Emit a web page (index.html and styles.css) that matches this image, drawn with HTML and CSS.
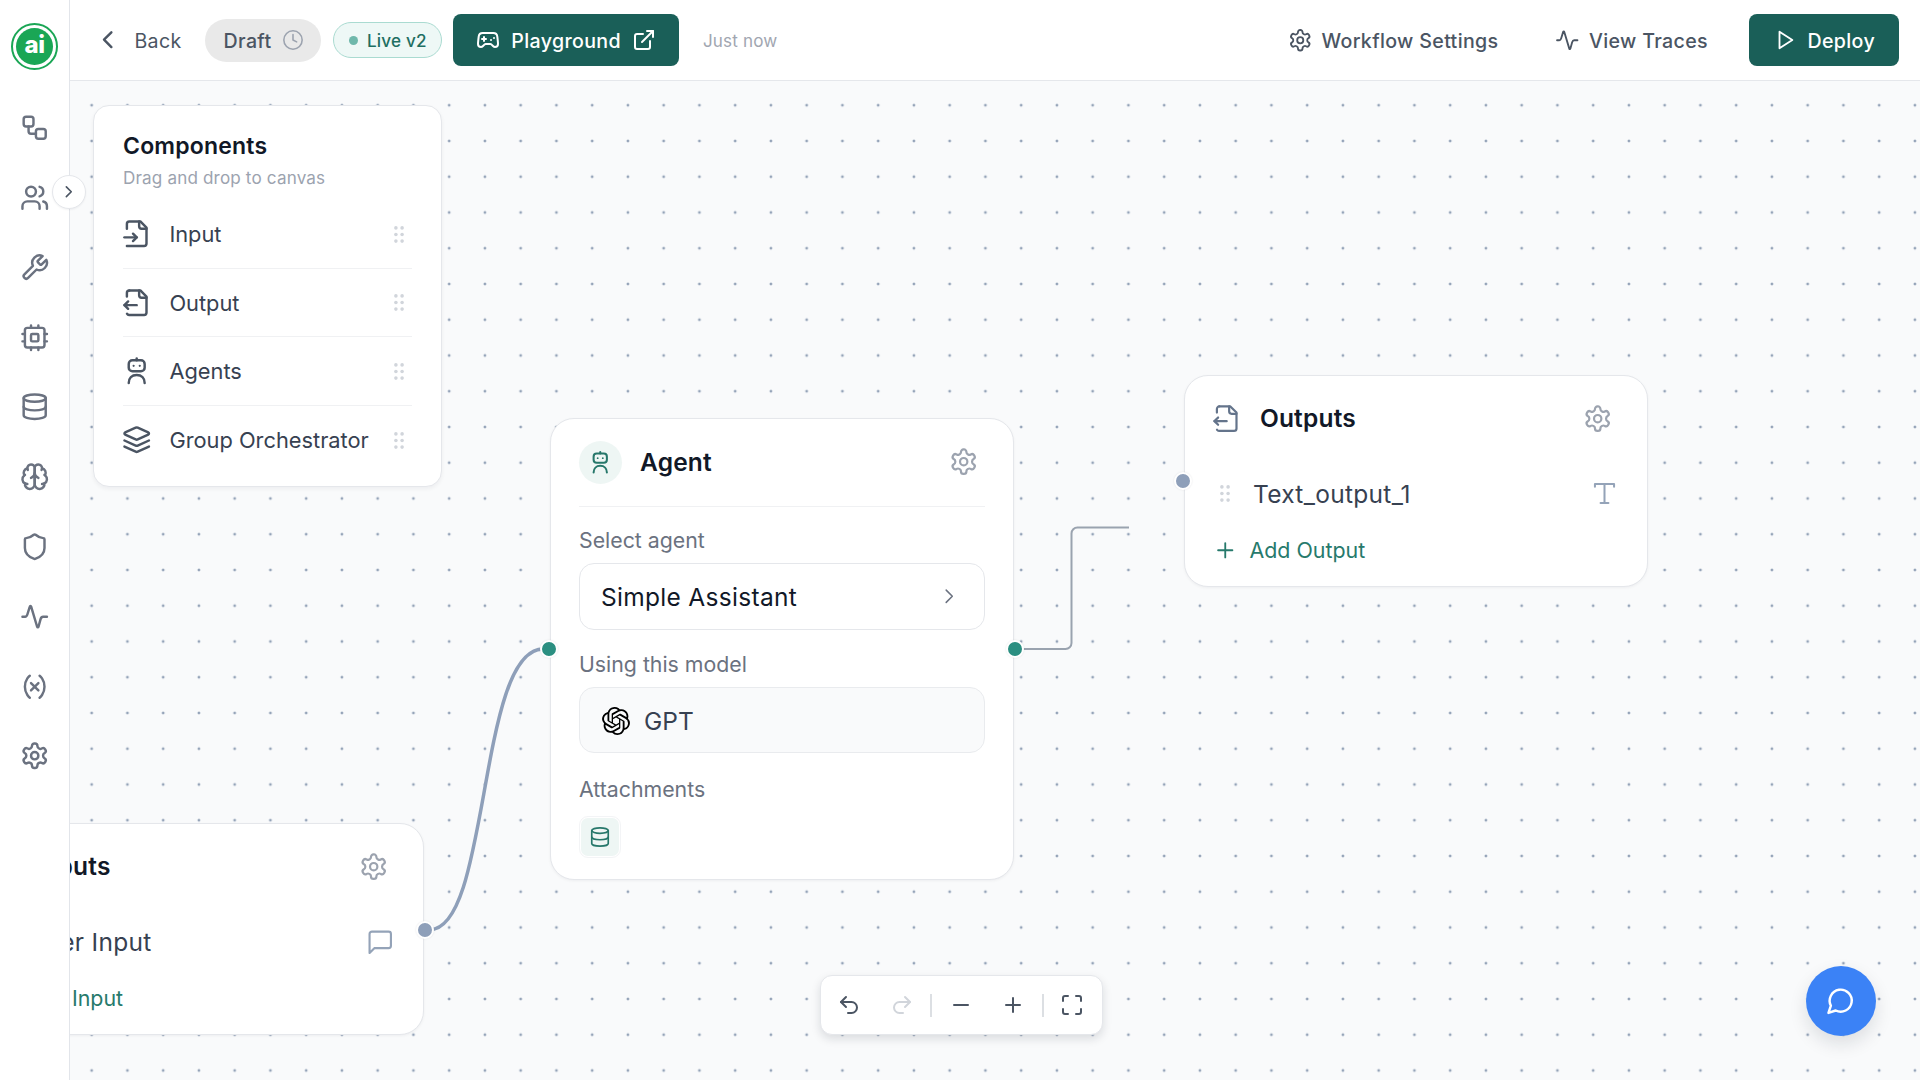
FILE: index.html
```html
<!DOCTYPE html>
<html lang="en">
<head>
<meta charset="utf-8">
<title>Workflow</title>
<link rel="stylesheet" href="styles.css">
</head>
<body>
<svg class="sprite" aria-hidden="true">
  <defs>
    <symbol id="i-settings" viewBox="0 0 24 24"><path d="M12.22 2h-.44a2 2 0 0 0-2 2v.18a2 2 0 0 1-1 1.73l-.43.25a2 2 0 0 1-2 0l-.15-.08a2 2 0 0 0-2.73.73l-.22.38a2 2 0 0 0 .73 2.73l.15.1a2 2 0 0 1 1 1.72v.51a2 2 0 0 1-1 1.74l-.15.09a2 2 0 0 0-.73 2.73l.22.38a2 2 0 0 0 2.73.73l.15-.08a2 2 0 0 1 2 0l.43.25a2 2 0 0 1 1 1.73V20a2 2 0 0 0 2 2h.44a2 2 0 0 0 2-2v-.18a2 2 0 0 1 1-1.73l.43-.25a2 2 0 0 1 2 0l.15.08a2 2 0 0 0 2.73-.73l.22-.39a2 2 0 0 0-.73-2.73l-.15-.08a2 2 0 0 1-1-1.74v-.5a2 2 0 0 1 1-1.74l.15-.09a2 2 0 0 0 .73-2.73l-.22-.38a2 2 0 0 0-2.73-.73l-.15.08a2 2 0 0 1-2 0l-.43-.25a2 2 0 0 1-1-1.73V4a2 2 0 0 0-2-2z"/><circle cx="12" cy="12" r="3"/></symbol>
    <symbol id="i-workflow" viewBox="0 0 24 24"><rect x="3" y="3" width="8" height="8" rx="2"/><path d="M7 11v4a2 2 0 0 0 2 2h4"/><rect x="13" y="13" width="8" height="8" rx="2"/></symbol>
    <symbol id="i-users" viewBox="0 0 24 24"><path d="M16 21v-2a4 4 0 0 0-4-4H6a4 4 0 0 0-4 4v2"/><circle cx="9" cy="7" r="4"/><path d="M22 21v-2a4 4 0 0 0-3-3.87"/><path d="M16 3.13a4 4 0 0 1 0 7.75"/></symbol>
    <symbol id="i-wrench" viewBox="0 0 24 24"><path d="M14.7 6.3a1 1 0 0 0 0 1.4l1.6 1.6a1 1 0 0 0 1.4 0l3.77-3.77a6 6 0 0 1-7.94 7.94l-6.91 6.91a2.12 2.12 0 0 1-3-3l6.91-6.91a6 6 0 0 1 7.94-7.94l-3.76 3.76z"/></symbol>
    <symbol id="i-cpu" viewBox="0 0 24 24"><rect x="4" y="4" width="16" height="16" rx="2"/><rect x="9" y="9" width="6" height="6" rx="1"/><path d="M15 2v2M15 20v2M2 15h2M2 9h2M20 15h2M20 9h2M9 2v2M9 20v2"/></symbol>
    <symbol id="i-database" viewBox="0 0 24 24"><ellipse cx="12" cy="5" rx="9" ry="3"/><path d="M3 5V19A9 3 0 0 0 21 19V5"/><path d="M3 12A9 3 0 0 0 21 12"/></symbol>
    <symbol id="i-brain" viewBox="0 0 24 24"><path d="M12 5a3 3 0 1 0-5.997.125 4 4 0 0 0-2.526 5.77 4 4 0 0 0 .556 6.588A4 4 0 1 0 12 18Z"/><path d="M12 5a3 3 0 1 1 5.997.125 4 4 0 0 1 2.526 5.77 4 4 0 0 1-.556 6.588A4 4 0 1 1 12 18Z"/><path d="M15 13a4.5 4.5 0 0 1-3-4 4.5 4.5 0 0 1-3 4"/><path d="M17.599 6.5a3 3 0 0 0 .399-1.375"/><path d="M6.003 5.125A3 3 0 0 0 6.401 6.5"/><path d="M3.477 10.896a4 4 0 0 1 .585-.396"/><path d="M19.938 10.5a4 4 0 0 1 .585.396"/><path d="M6 18a4 4 0 0 1-1.967-.516"/><path d="M19.967 17.484A4 4 0 0 1 18 18"/></symbol>
    <symbol id="i-shield" viewBox="0 0 24 24"><path d="M20 13c0 5-3.5 7.5-7.66 8.95a1 1 0 0 1-.67-.01C7.5 20.5 4 18 4 13V6a1 1 0 0 1 1-1c2 0 4.5-1.2 6.24-2.72a1.17 1.17 0 0 1 1.52 0C14.51 3.81 17 5 19 5a1 1 0 0 1 1 1z"/></symbol>
    <symbol id="i-activity" viewBox="0 0 24 24"><path d="M2 12h2.2c1.1 0 1.5-.8 1.8-1.8L8 3.8c.2-.7.9-.7 1.1 0L14 20.2c.2.7.9.7 1.1 0l1.7-6.200c.3-1 .8-2 2-2H22"/></symbol>
    <symbol id="i-variable" viewBox="0 0 24 24"><path d="M8 21s-4-3-4-9 4-9 4-9"/><path d="M16 3s4 3 4 9-4 9-4 9"/><path d="M15 9l-6 6"/><path d="M9 9l6 6"/></symbol>
    <symbol id="i-file-in" viewBox="0 0 24 24"><path d="M4 22h14a2 2 0 0 0 2-2V7l-5-5H6a2 2 0 0 0-2 2v4"/><path d="M14 2v4a2 2 0 0 0 2 2h4"/><path d="M2 15h10"/><path d="m9 18 3-3-3-3"/></symbol>
    <symbol id="i-file-out" viewBox="0 0 24 24"><path d="M14 2v4a2 2 0 0 0 2 2h4"/><path d="M4 7V4a2 2 0 0 1 2-2"/><path d="M4.063 20.999a2 2 0 0 0 2 1L18 22a2 2 0 0 0 2-2V7l-5-5H6"/><path d="m5 11-3 3"/><path d="m5 17-3-3h10"/></symbol>
    <symbol id="i-robot" viewBox="0 0 24 24"><rect x="5.5" y="3.5" width="13" height="9" rx="3"/><path d="M12 3.5V2"/><circle class="fill" cx="9.5" cy="8" r=".9"/><circle class="fill" cx="14.5" cy="8" r=".9"/><path d="M5.5 22c0-4 2.600-6.500 6.500-6.500s6.500 2.500 6.500 6.500"/></symbol>
    <symbol id="i-layers" viewBox="0 0 24 24"><path d="m12.83 2.18a2 2 0 0 0-1.66 0L2.6 6.08a1 1 0 0 0 0 1.83l8.58 3.91a2 2 0 0 0 1.66 0l8.58-3.9a1 1 0 0 0 0-1.83Z"/><path d="m22 17.65-9.17 4.16a2 2 0 0 1-1.66 0L2 17.65"/><path d="m22 12.65-9.17 4.16a2 2 0 0 1-1.66 0L2 12.65"/></symbol>
    <symbol id="i-left" viewBox="0 0 24 24"><path d="m15 18-6-6 6-6"/></symbol>
    <symbol id="i-right" viewBox="0 0 24 24"><path d="m9 18 6-6-6-6"/></symbol>
    <symbol id="i-clock" viewBox="0 0 24 24"><circle cx="12" cy="12" r="10"/><path d="M12 6v6l4 2"/></symbol>
    <symbol id="i-gamepad" viewBox="0 0 24 24"><path d="M6 11h4M8 9v4M15 12h.01M18 10h.01"/><path d="M17.32 5H6.68a4 4 0 0 0-3.978 3.59c-.006.052-.01.101-.017.152C2.604 9.416 2 14.456 2 16a3 3 0 0 0 3 3c1 0 1.5-.5 2-1l1.414-1.414A2 2 0 0 1 9.828 16h4.344a2 2 0 0 1 1.414.586L17 18c.5.5 1 1 2 1a3 3 0 0 0 3-3c0-1.545-.604-6.584-.685-7.258-.007-.05-.011-.1-.017-.151A4 4 0 0 0 17.32 5z"/></symbol>
    <symbol id="i-external" viewBox="0 0 24 24"><path d="M15 3h6v6"/><path d="M10 14 21 3"/><path d="M18 13v6a2 2 0 0 1-2 2H5a2 2 0 0 1-2-2V8a2 2 0 0 1 2-2h6"/></symbol>
    <symbol id="i-play" viewBox="0 0 24 24"><path d="M6 3l14 9-14 9z"/></symbol>
    <symbol id="i-grip" viewBox="0 0 10 17"><circle class="fill" cx="1.9" cy="1.9" r="1.8"/><circle class="fill" cx="8.1" cy="1.9" r="1.8"/><circle class="fill" cx="1.9" cy="8.5" r="1.8"/><circle class="fill" cx="8.1" cy="8.5" r="1.8"/><circle class="fill" cx="1.9" cy="15.1" r="1.8"/><circle class="fill" cx="8.1" cy="15.1" r="1.8"/></symbol>
    <symbol id="i-type" viewBox="0 0 24 24"><path d="M3.5 6V3.500h17V6"/><path d="M12 3.500v17"/><path d="M8.500 20.500h7"/></symbol>
    <symbol id="i-message" viewBox="0 0 24 24"><path d="M21 15a2 2 0 0 1-2 2H7l-4 4V5a2 2 0 0 1 2-2h14a2 2 0 0 1 2 2z"/></symbol>
    <symbol id="i-plus" viewBox="0 0 24 24"><path d="M5 12h14"/><path d="M12 5v14"/></symbol>
    <symbol id="i-minus" viewBox="0 0 24 24"><path d="M5 12h14"/></symbol>
    <symbol id="i-undo" viewBox="0 0 24 24"><path d="M9 14 4 9l5-5"/><path d="M4 9h10.5a5.5 5.5 0 0 1 5.5 5.5a5.5 5.5 0 0 1-5.5 5.5H11"/></symbol>
    <symbol id="i-redo" viewBox="0 0 24 24"><path d="m15 14 5-5-5-5"/><path d="M20 9H9.5A5.5 5.5 0 0 0 4 14.5A5.5 5.5 0 0 0 9.5 20H13"/></symbol>
    <symbol id="i-maximize" viewBox="0 0 24 24"><path d="M8 3H5a2 2 0 0 0-2 2v3"/><path d="M21 8V5a2 2 0 0 0-2-2h-3"/><path d="M3 16v3a2 2 0 0 0 2 2h3"/><path d="M16 21h3a2 2 0 0 0 2-2v-3"/></symbol>
    <symbol id="i-bubble" viewBox="0 0 24 24"><path d="M7.9 20A9 9 0 1 0 4 16.1L2 22Z"/></symbol>
    <symbol id="i-openai" viewBox="0 0 24 24"><path class="fill" d="M22.2819 9.8211a5.9847 5.9847 0 0 0-.5157-4.9108 6.0462 6.0462 0 0 0-6.5098-2.9A6.0651 6.0651 0 0 0 4.9807 4.1818a5.9847 5.9847 0 0 0-3.9977 2.9 6.0462 6.0462 0 0 0 .7427 7.0966 5.98 5.98 0 0 0 .511 4.9107 6.051 6.051 0 0 0 6.5146 2.9001A5.9847 5.9847 0 0 0 13.2599 24a6.0557 6.0557 0 0 0 5.7718-4.2058 5.9894 5.9894 0 0 0 3.9977-2.9001 6.0557 6.0557 0 0 0-.7475-7.0729zm-9.022 12.6081a4.4755 4.4755 0 0 1-2.8764-1.0408l.1419-.0804 4.7783-2.7582a.7948.7948 0 0 0 .3927-.6813v-6.7369l2.02 1.1686a.071.071 0 0 1 .038.052v5.5826a4.504 4.504 0 0 1-4.4945 4.4944zm-9.6607-4.1254a4.4708 4.4708 0 0 1-.5346-3.0137l.142.0852 4.783 2.7582a.7712.7712 0 0 0 .7806 0l5.8428-3.3685v2.3324a.0804.0804 0 0 1-.0332.0615L9.74 19.9502a4.4992 4.4992 0 0 1-6.1408-1.6464zM2.3408 7.8956a4.485 4.485 0 0 1 2.3655-1.9728V11.6a.7664.7664 0 0 0 .3879.6765l5.8144 3.3543-2.0201 1.1685a.0757.0757 0 0 1-.071 0l-4.8303-2.7865A4.504 4.504 0 0 1 2.3408 7.872zm16.5963 3.8558L13.1038 8.364 15.1192 7.2a.0757.0757 0 0 1 .071 0l4.8303 2.7913a4.4944 4.4944 0 0 1-.6765 8.1042v-5.6772a.79.79 0 0 0-.407-.667zm2.0107-3.0231l-.142-.0852-4.7735-2.7818a.7759.7759 0 0 0-.7854 0L9.409 9.2297V6.8974a.0662.0662 0 0 1 .0284-.0615l4.8303-2.7866a4.4992 4.4992 0 0 1 6.6802 4.66zM8.3065 12.863l-2.02-1.1638a.0804.0804 0 0 1-.038-.0567V6.0742a4.4992 4.4992 0 0 1 7.3757-3.4537l-.142.0805L8.704 5.459a.7948.7948 0 0 0-.3927.6813zm1.0976-2.3654l2.602-1.4998 2.6069 1.4998v2.9994l-2.5974 1.4997-2.6067-1.4997Z"/></symbol>
  </defs>
</svg>

<aside class="sidebar">
  <div class="logo"><div class="logo-disc">ai</div></div>
  <nav class="nav">
    <a class="nav-item"><svg class="ic ic-nav"><use href="#i-workflow"/></svg></a>
    <a class="nav-item"><svg class="ic ic-nav"><use href="#i-users"/></svg></a>
    <a class="nav-item"><svg class="ic ic-nav"><use href="#i-wrench"/></svg></a>
    <a class="nav-item"><svg class="ic ic-nav"><use href="#i-cpu"/></svg></a>
    <a class="nav-item"><svg class="ic ic-nav"><use href="#i-database"/></svg></a>
    <a class="nav-item"><svg class="ic ic-nav"><use href="#i-brain"/></svg></a>
    <a class="nav-item"><svg class="ic ic-nav"><use href="#i-shield"/></svg></a>
    <a class="nav-item"><svg class="ic ic-nav"><use href="#i-activity"/></svg></a>
    <a class="nav-item"><svg class="ic ic-nav"><use href="#i-variable"/></svg></a>
    <a class="nav-item"><svg class="ic ic-nav"><use href="#i-settings"/></svg></a>
  </nav>
  <button class="toggle"><svg class="ic ic-toggle"><use href="#i-right"/></svg></button>
</aside>

<div class="main">
  <header class="topbar">
    <a class="back"><svg class="ic ic-back"><use href="#i-left"/></svg><span class="top-text">Back</span></a>
    <span class="pill-draft"><span class="top-text">Draft</span><svg class="ic ic-clock"><use href="#i-clock"/></svg></span>
    <span class="pill-live"><i class="live-dot"></i><span>Live v2</span></span>
    <a class="btn btn-playground"><svg class="ic ic-btn"><use href="#i-gamepad"/></svg><span class="top-text">Playground</span><svg class="ic ic-btn"><use href="#i-external"/></svg></a>
    <span class="saved">Just now</span>
    <a class="link link-settings"><svg class="ic ic-link"><use href="#i-settings"/></svg><span class="top-text">Workflow Settings</span></a>
    <a class="link link-traces"><svg class="ic ic-link"><use href="#i-activity"/></svg><span class="top-text">View Traces</span></a>
    <a class="btn btn-deploy"><svg class="ic ic-play"><use href="#i-play"/></svg><span class="top-text">Deploy</span></a>
  </header>

  <main class="canvas">
    <svg class="edges">
      <path class="edge-thick" d="M360 848.5C420 848.5 408 568 473 568"/>
      <path class="edge-thin" d="M945 568H995.5a6 6 0 0 0 6-6V452.500a6 6 0 0 1 6-6H1059"/>
    </svg>

    <section class="panel">
      <h2 class="panel-title">Components</h2>
      <p class="panel-sub">Drag and drop to canvas</p>
      <ul class="comp-list">
        <li class="comp"><svg class="ic ic-comp"><use href="#i-file-in"/></svg><span class="comp-name">Input</span><svg class="grip"><use href="#i-grip"/></svg></li>
        <li class="comp"><svg class="ic ic-comp"><use href="#i-file-out"/></svg><span class="comp-name">Output</span><svg class="grip"><use href="#i-grip"/></svg></li>
        <li class="comp"><svg class="ic ic-comp"><use href="#i-robot"/></svg><span class="comp-name">Agents</span><svg class="grip"><use href="#i-grip"/></svg></li>
        <li class="comp"><svg class="ic ic-comp"><use href="#i-layers"/></svg><span class="comp-name">Group Orchestrator</span><svg class="grip"><use href="#i-grip"/></svg></li>
      </ul>
    </section>

    <article class="node node-agent">
      <div class="agent-head">
        <span class="agent-badge"><svg class="ic ic-badge"><use href="#i-robot"/></svg></span>
        <h3 class="node-title">Agent</h3>
        <svg class="ic ic-gear"><use href="#i-settings"/></svg>
      </div>
      <div class="field-label label-first">Select agent</div>
      <div class="select"><span>Simple Assistant</span><svg class="ic ic-chevron"><use href="#i-right"/></svg></div>
      <div class="field-label label-model">Using this model</div>
      <div class="model"><svg class="ic ic-openai"><use href="#i-openai"/></svg><span>GPT</span></div>
      <div class="field-label label-attach">Attachments</div>
      <div class="chip"><svg class="ic ic-chip"><use href="#i-database"/></svg></div>
      <i class="handle handle-green handle-agent-in"></i>
      <i class="handle handle-green handle-agent-out"></i>
    </article>

    <article class="node node-io node-outputs">
      <div class="io-head">
        <svg class="ic ic-io"><use href="#i-file-out"/></svg>
        <h3 class="node-title">Outputs</h3>
        <svg class="ic ic-gear"><use href="#i-settings"/></svg>
      </div>
      <div class="io-row">
        <svg class="grip"><use href="#i-grip"/></svg>
        <span class="io-name">Text_output_1</span>
        <svg class="ic ic-type"><use href="#i-type"/></svg>
      </div>
      <div class="io-add"><svg class="ic ic-plus"><use href="#i-plus"/></svg><span>Add Output</span></div>
      <i class="handle handle-gray handle-out-in"></i>
    </article>

    <article class="node node-io node-inputs">
      <div class="io-head">
        <svg class="ic ic-io"><use href="#i-file-in"/></svg>
        <h3 class="node-title">Inputs</h3>
        <svg class="ic ic-gear"><use href="#i-settings"/></svg>
      </div>
      <div class="io-row">
        <svg class="grip"><use href="#i-grip"/></svg>
        <span class="io-name">User Input</span>
        <svg class="ic ic-msg"><use href="#i-message"/></svg>
      </div>
      <div class="io-add"><svg class="ic ic-plus"><use href="#i-plus"/></svg><span>Add Input</span></div>
      <i class="handle handle-gray handle-in-out"></i>
    </article>

    <div class="toolbar">
      <svg class="ic ic-tool"><use href="#i-undo"/></svg>
      <svg class="ic ic-tool tool-redo"><use href="#i-redo"/></svg>
      <i class="tool-sep"></i>
      <svg class="ic ic-tool"><use href="#i-minus"/></svg>
      <svg class="ic ic-tool tool-plus"><use href="#i-plus"/></svg>
      <i class="tool-sep"></i>
      <svg class="ic ic-tool"><use href="#i-maximize"/></svg>
    </div>

    <button class="fab"><svg class="ic ic-fab"><use href="#i-bubble"/></svg></button>
  </main>
</div>
</body>
</html>
```
FILE: styles.css
```css
* { box-sizing: border-box; }
html, body { margin: 0; height: 100%; }
body {
  display: flex;
  height: 100vh;
  overflow: hidden;
  font-family: Inter, "Liberation Sans", sans-serif;
  background: #fff;
  color: #374151;
}
h2, h3, p, ul { margin: 0; padding: 0; }
ul { list-style: none; }
i { display: block; }
.sprite { position: absolute; width: 0; height: 0; }

.ic { flex: none; fill: none; stroke: currentColor; stroke-width: 2; stroke-linecap: round; stroke-linejoin: round; }
.fill { fill: currentColor; stroke: none; }

/* sidebar */
.sidebar {
  position: relative;
  z-index: 3;
  flex: none;
  width: 70px;
  background: #fff;
  border-right: 1px solid #e2e5ea;
  display: flex;
  flex-direction: column;
  align-items: center;
}
.logo {
  width: 47px;
  height: 47px;
  margin-top: 23px;
  padding: 3px;
  border: 2px solid #1aa655;
  border-radius: 50%;
}
.logo-disc {
  width: 100%;
  height: 100%;
  border-radius: 50%;
  background: #1aa655;
  color: #fff;
  font-weight: 800;
  font-size: 24px;
  line-height: 34px;
  text-align: center;
  letter-spacing: -.5px;
}
.nav { margin-top: 23px; display: flex; flex-direction: column; }
.nav-item { height: 69.8px; display: flex; align-items: center; justify-content: center; color: #6b7280; }
.ic-nav { width: 29.4px; height: 29.4px; }
.toggle {
  position: absolute;
  right: -17px;
  top: 175px;
  width: 34px;
  height: 34px;
  padding: 0;
  border: 1px solid #e5e7eb;
  border-radius: 50%;
  background: #fff;
  color: #4b5563;
  display: flex;
  align-items: center;
  justify-content: center;
  box-shadow: 0 1px 2px rgba(15, 23, 42, .05);
}
.ic-toggle { width: 19.6px; height: 19.6px; }

/* top bar */
.main { flex: 1; min-width: 0; display: flex; flex-direction: column; }
.topbar {
  flex: none;
  height: 81px;
  display: flex;
  align-items: center;
  padding: 0 21px 0 23px;
  background: #fff;
  border-bottom: 1px solid #e5e7eb;
  font-size: 19.6px;
  letter-spacing: .35px;
}
.top-text { padding-top: 1.5px; }
.back { display: flex; align-items: center; gap: 12px; color: #4b5563; }
.ic-back { width: 29.4px; height: 29.4px; }
.pill-draft {
  margin-left: 23px;
  height: 43px;
  padding: 0 17px 0 19px;
  display: flex;
  align-items: center;
  gap: 11px;
  background: #e9e9e9;
  border-radius: 22px;
  color: #4b5563;
  font-weight: 500;
}
.ic-clock { width: 22px; height: 22px; color: #9ca3af; stroke-width: 1.7; }
.pill-live {
  margin-left: 11.5px;
  height: 36px;
  padding: 0 14px 0 15px;
  display: flex;
  align-items: center;
  gap: 9px;
  background: #eef8f6;
  border: 1px solid #aadbd1;
  border-radius: 18px;
  color: #1f6f62;
  font-size: 17.1px;
  font-weight: 500;
  letter-spacing: .2px;
}
.live-dot { width: 9px; height: 9px; border-radius: 50%; background: #6fb8ab; }
.btn {
  height: 52px;
  display: flex;
  align-items: center;
  border-radius: 8px;
  background: #1a5f58;
  color: #fff;
  font-weight: 500;
}
.btn-playground { margin-left: 11.5px; padding: 0 22.5px; gap: 11.5px; }
.ic-btn { width: 24px; height: 24px; }
.saved { margin-left: 24px; color: #a1a6b1; font-size: 17.1px; letter-spacing: .15px; }
.link { display: flex; align-items: center; gap: 9px; color: #4b5563; font-weight: 500; }
.link-settings { margin-left: auto; }
.link-traces { margin-left: 57px; }
.ic-link { width: 24.5px; height: 24.5px; stroke-width: 1.8; }
.btn-deploy { margin-left: 41px; padding: 0 24px 0 25px; gap: 11.5px; }
.ic-play { width: 22px; height: 22px; }

/* canvas */
.canvas {
  position: relative;
  flex: 1;
  overflow: hidden;
  background-color: #f9fafb;
  background-image: radial-gradient(circle, #94a3b8 1.2px, transparent 1.7px);
  background-size: 35.75px 35.75px;
  background-position: 3.8px 6.35px;
}
.edges { position: absolute; inset: 0; width: 100%; height: 100%; fill: none; }
.edge-thick { stroke: #8e9fb9; stroke-width: 3.5px; }
.edge-thin { stroke: #9aa3af; stroke-width: 2px; }

/* components panel */
.panel {
  position: absolute;
  left: 23px;
  top: 24px;
  width: 348.5px;
  height: 381.5px;
  padding: 26px 29px 0;
  background: #fff;
  border: 1px solid #e5e7eb;
  border-radius: 16px;
  box-shadow: 0 2px 4px rgba(15, 23, 42, .05);
  z-index: 2;
}
.panel-title { font-size: 23px; font-weight: 600; line-height: 29px; color: #111827; letter-spacing: .2px; }
.panel-sub { margin-top: 5px; font-size: 17.1px; line-height: 24px; color: #9ca3af; letter-spacing: .15px; }
.comp-list { margin-top: 10.4px; }
.comp {
  height: 68.5px;
  display: flex;
  align-items: center;
  border-bottom: 1px solid #f0f1f3;
  color: #4b5563;
}
.comp:last-child { border-bottom: 0; }
.ic-comp { width: 29.4px; height: 29.4px; margin-left: -1px; }
.comp-name { margin-left: 18px; font-size: 21.8px; color: #374151; }
.grip { flex: none; width: 10px; height: 17px; color: #d1d5db; }
.comp .grip { margin-left: auto; margin-right: 7.3px; }

/* nodes */
.node {
  position: absolute;
  background: #fff;
  border: 1px solid #e5e7eb;
  border-radius: 24px;
  box-shadow: 0 1px 3px rgba(15, 23, 42, .05);
}
.node-title { font-size: 24.5px; font-weight: 600; color: #111827; line-height: 30px; letter-spacing: .2px; }
.ic-gear { width: 29.4px; height: 29.4px; margin-left: auto; color: #9ca3af; stroke-width: 1.8; }

.node-agent { left: 480px; top: 337px; width: 464px; height: 462px; padding: 22px 28px 0; }
.agent-head {
  display: flex;
  align-items: center;
  gap: 18px;
  height: 66px;
  padding-bottom: 23px;
  border-bottom: 1px solid #f0f1f3;
}
.agent-head .ic-gear { margin-right: 7px; }
.agent-badge {
  width: 43px;
  height: 43px;
  border-radius: 50%;
  background: #eef6f4;
  color: #26776a;
  display: flex;
  align-items: center;
  justify-content: center;
}
.ic-badge { width: 24.5px; height: 24.5px; }
.field-label { font-size: 21.3px; line-height: 30px; color: #6b7280; }
.label-first { margin-top: 18px; }
.label-model { margin-top: 19px; }
.label-attach { margin-top: 21px; }
.select {
  margin-top: 8px;
  height: 67px;
  padding: 0 23px 0 21px;
  display: flex;
  align-items: center;
  justify-content: space-between;
  border: 1px solid #e5e7eb;
  border-radius: 15px;
  font-size: 24.5px;
  letter-spacing: .3px;
  color: #111827;
}
.ic-chevron { width: 24.5px; height: 24.5px; color: #6b7280; stroke-width: 1.5; }
.model {
  margin-top: 8px;
  height: 66px;
  padding: 1px 22px 0;
  display: flex;
  align-items: center;
  gap: 14px;
  border: 1px solid #e9ebee;
  border-radius: 15px;
  background: #f9fafb;
  font-size: 24.5px;
  color: #374151;
}
.ic-openai { width: 28px; height: 28px; color: #000; }
.chip {
  margin-top: 12px;
  width: 42px;
  height: 42px;
  border: 2px solid #fff;
  outline: 1px solid #f3f4f6;
  outline-offset: -1px;
  border-radius: 9px;
  background: #eef6f4;
  color: #26776a;
  display: flex;
  align-items: center;
  justify-content: center;
}
.ic-chip { width: 22px; height: 22px; stroke-width: 1.8; }

.handle { position: absolute; width: 14px; height: 14px; border-radius: 50%; border: 2px solid #fff; box-shadow: 0 0 2px rgba(15, 23, 42, .1); box-sizing: content-box; }
.handle-green { background: #2b8f81; }
.handle-gray { background: #8e9fb9; }
.handle-agent-in { left: -11.5px; top: 220.5px; }
.handle-agent-out { right: -10.5px; top: 220.5px; }
.handle-out-in { left: -11.5px; top: 96px; }
.handle-in-out { right: -11.5px; top: 96.5px; }

.node-io { width: 464px; height: 212px; padding: 0 29px; }
.node-outputs { left: 1114px; top: 294px; }
.node-inputs { left: -110.5px; top: 742px; }
.io-head { height: 84.5px; display: flex; align-items: center; gap: 18.5px; }
.ic-io { width: 29.4px; height: 29.4px; margin-left: -2px; color: #64748b; stroke-width: 1.8; }
.io-head .ic-gear { margin-right: 5.3px; }
.io-row { height: 66px; margin-top: .3px; display: flex; align-items: center; }
.io-row .grip { margin-left: 6.3px; margin-right: 22.7px; }
.io-name { font-size: 24.5px; letter-spacing: .3px; color: #374151; }
.ic-type { width: 27px; height: 27px; margin-left: auto; margin-right: .5px; color: #94a3b8; stroke-width: 1.8; }
.ic-msg { width: 28.5px; height: 28.5px; margin-left: auto; margin-right: -.75px; color: #94a3b8; stroke-width: 1.8; }
.io-add { margin-top: 10px; display: flex; align-items: center; gap: 11.75px; font-size: 21.4px; color: #277a6c; }
.ic-plus { width: 24.5px; height: 24.5px; margin-left: -.75px; stroke-width: 1.8; }

/* zoom toolbar */
.toolbar {
  position: absolute;
  left: 750px;
  top: 894px;
  width: 283px;
  height: 60px;
  padding-left: 16px;
  display: flex;
  align-items: center;
  gap: 16.5px;
  background: #fff;
  border: 1px solid #e5e7eb;
  border-radius: 12px;
  box-shadow: 0 4px 10px rgba(15, 23, 42, .13);
  color: #4b5563;
}
.ic-tool { width: 24px; height: 24px; }
.tool-redo { margin-left: 12.2px; color: #d1d5db; }
.tool-plus { margin-left: 12.2px; }
.tool-sep { width: 2px; height: 23px; background: #dcdfe3; }

.fab {
  position: absolute;
  right: 44px;
  bottom: 44px;
  width: 70px;
  height: 70px;
  padding: 0;
  border: 0;
  border-radius: 50%;
  background: #3b82f6;
  color: #fff;
  display: flex;
  align-items: center;
  justify-content: center;
  box-shadow: 0 8px 18px rgba(15, 23, 42, .12);
}
.ic-fab { width: 29.4px; height: 29.4px; }
```
